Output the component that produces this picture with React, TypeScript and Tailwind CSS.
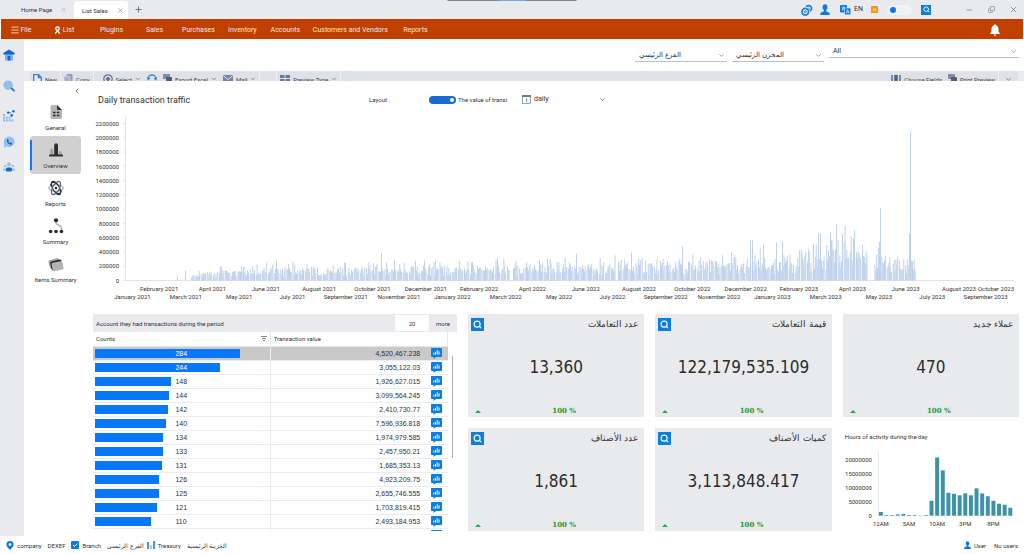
import type { ReactNode } from 'react';
import { ChevronDown, ChevronLeft, Copy, Menu, Minus, Plus, Search, X } from 'lucide-react';

type IconProps = { className?: string };

const MENU_ITEMS = ['Plugins', 'Sales', 'Purchases', 'Inventory', 'Accounts', 'Customers and Vendors', 'Reports'];

const ROWS = [
  { count: 284, value: '4,520,467.238' },
  { count: 244, value: '3,055,122.03' },
  { count: 148, value: '1,926,627.015' },
  { count: 144, value: '3,099,564.245' },
  { count: 142, value: '2,410,730.77' },
  { count: 140, value: '7,596,936.818' },
  { count: 134, value: '1,974,979.585' },
  { count: 133, value: '2,457,950.21' },
  { count: 131, value: '1,685,353.13' },
  { count: 126, value: '4,923,209.75' },
  { count: 125, value: '2,655,746.555' },
  { count: 121, value: '1,703,819.415' },
  { count: 110, value: '2,493,184.953' },
  { count: 95, value: '' },
];

const MONTHS = [
  'January', 'February', 'March', 'April', 'May', 'June', 'July',
  'August', 'September', 'October', 'November', 'December',
];

const HOURS = [
  3.7, 0.7, 0.7, 1.3, 1.7, 0.7, 0.7, 0.3, 0.7, 15, 58.5, 45.5,
  23, 22, 20.5, 22.5, 20.5, 27.5, 22.3, 19.5, 15, 12, 11, 8,
];

/* ---------- daily traffic data ---------- */

// [x, typical height] control points of the plot
const ENVELOPE = [
  [98, 7], [160, 12], [280, 14], [400, 15], [500, 17], [600, 19], [680, 23],
  [720, 27], [745, 34], [770, 31], [800, 23], [823, 21],
];

// [x, height] of the days that stand out
const PEAKS = [
  [84, 5], [92, 10], [127, 14], [150, 13], [183, 20], [288, 27], [301, 20], [331, 20], [404, 22],
  [446, 20], [454, 22], [483, 27], [538, 28], [589, 34], [638, 28], [657, 40], [659, 40],
  [670, 36], [683, 38], [689, 39], [720, 37], [725, 47], [727, 47], [737, 49], [738, 40],
  [743, 56], [749, 46], [760, 42], [761, 50], [786, 39], [787, 72], [816, 47], [817, 149],
];

const envelopeAt = (x: number) => {
  const i = Math.max(1, ENVELOPE.findIndex(([px]) => px >= x));
  const [x0, y0] = ENVELOPE[i - 1];
  const [x1, y1] = ENVELOPE[i];
  return y0 + ((y1 - y0) * (x - x0)) / (x1 - x0);
};

const buildDays = () => {
  const days: number[][] = [];
  let seed = 4217;
  const next = () => {
    seed = (seed * 16807) % 2147483647;
    return seed / 2147483647;
  };
  for (let i = 0; i < 828; i++) {
    const x = 98 + i * 0.875;
    const r = next();
    const s = next();
    if (i % 7 === 3 || (x > 775 && x < 780) || (x > 416 && x < 419) || (x > 522 && x < 525)) continue;
    days.push([x, envelopeAt(x) * (0.3 + 0.7 * r + 0.7 * Math.pow(s, 6))]);
  }
  return days;
};

const DAYS = [...buildDays(), ...PEAKS];

/* ---------- icons ---------- */

const HomeIcon = () => (
  <svg viewBox="0 0 12 12" className="size-3">
    <path d="M2 5h8v6.500H2z" fill="#7fb0e8" />
    <path d="M6 .500 11.700 4v1.600H.3V4z" fill="#1467cf" />
    <path d="M4.600 7h2.800v4.500H4.600z" fill="#1467cf" />
  </svg>
);

const FindIcon = () => (
  <svg viewBox="0 0 12 12" className="size-3">
    <circle cx="5.200" cy="5.200" r="4.800" fill="#96bdeb" />
    <path d="m8.600 8.400 2.400 2.400" stroke="#1467cf" strokeWidth="1.600" strokeLinecap="round" />
  </svg>
);

const DotsIcon = () => (
  <svg viewBox="0 0 12 12" className="size-3">
    <g fill="#8fb8ea">
      <rect x="0" y="4" width="2" height="2" /><rect x="0" y="6.700" width="2" height="2" />
      <rect x="0" y="9.400" width="2" height="2" /><rect x="2.800" y="6.700" width="2" height="2" />
      <rect x="2.800" y="9.400" width="2" height="2" /><rect x="5.600" y="6.700" width="2" height="2" />
      <rect x="5.600" y="9.400" width="2" height="2" /><rect x="8.400" y="9.400" width="2" height="2" />
    </g>
    <g fill="#1467cf">
      <circle cx="5.200" cy="2.600" r="1.200" /><circle cx="10.400" cy="1.300" r="1.200" />
      <circle cx="8.600" cy="5.400" r="1.300" /><circle cx="7" cy="2.800" r=".7" />
    </g>
  </svg>
);

const PhoneIcon = () => (
  <svg viewBox="0 0 12 12" className="size-3">
    <path d="M6.200.500a5.300 5.300 0 1 1-2.400 10L.600 11.400l.800-3A5.400 5.400 0 0 1 6.200.500z" fill="#96bdeb" />
    <path d="M4 3.200 5 3l.8 1.600-.6.8c.4.8 1 1.300 1.700 1.600l.8-.6 1.500.9-.3 1.100C6.500 9.400 3 6.300 4 3.200z" fill="#1467cf" />
  </svg>
);

const GroupIcon = () => (
  <svg viewBox="0 0 12 10" className="h-[10px] w-3">
    <g fill="#96bdeb">
      <circle cx="6" cy="2.300" r="2" /><circle cx="2.200" cy="4" r="1.300" /><circle cx="9.800" cy="4" r="1.300" />
      <rect x="0" y="6.400" width="12" height="2.400" rx="1.200" />
    </g>
    <rect x="3" y="5.600" width="6" height="3.900" rx="1.500" fill="#1467cf" />
  </svg>
);

const GeneralIcon = () => (
  <svg viewBox="0 0 16 16" className="size-4">
    <path d="M4 1h5l5 5v7.500a1.500 1.500 0 0 1-1.500 1.500h-8.500A1.500 1.500 0 0 1 2.500 13.500v-11A1.500 1.500 0 0 1 4 1z" fill="#b5b5b5" />
    <path d="M9 1 14 6h-4a1 1 0 0 1-1-1z" fill="#333" />
    <path d="M5 8.500h2.600M8.800 8.500h2.600M5 11.500h2.600M8.800 11.500h2.600" stroke="#2b2d33" strokeWidth="1.300" />
  </svg>
);

const OverviewIcon = () => (
  <svg viewBox="0 0 16 16" className="size-4">
    <path d="M2.200 13V8a1.600 1.600 0 0 1 3.200 0v5zM10.800 13v-2.500a1.500 1.500 0 0 1 3 0V13z" fill="#a2a2a2" />
    <path d="M6.200 13V3.200a1.900 1.900 0 0 1 3.800 0V13z" fill="#2b2d33" />
    <rect x="1" y="12.500" width="14" height="2" rx=".8" fill="#2b2d33" />
  </svg>
);

const ReportsIcon = () => (
  <svg viewBox="0 0 16 16" className="size-4" fill="none">
    <ellipse cx="8" cy="8" rx="7.300" ry="3.200" stroke="#aeb2b8" strokeWidth="1.200" />
    <ellipse cx="8" cy="8" rx="7.300" ry="3.200" transform="rotate(60 8 8)" stroke="#26323f" strokeWidth="1.300" />
    <ellipse cx="8" cy="8" rx="7.300" ry="3.200" transform="rotate(-60 8 8)" stroke="#5f6a76" strokeWidth="1.300" />
    <path d="M2.500 5.500 4 2.200l3.500.6M13.500 10.500 12 13.800l-3.500-.6" stroke="#26323f" strokeWidth="1.200" />
    <circle cx="8" cy="8" r="2.600" fill="#fff" />
    <circle cx="8" cy="8" r="1.300" fill="#26323f" />
  </svg>
);

const SummaryIcon = () => (
  <svg viewBox="0 0 16 16" className="size-4">
    <path d="M8 3v1.500c0 3.500 5.500 1.500 5.500 6V12" stroke="#b5b5b5" strokeWidth="1.500" fill="none" />
    <g fill="#2b2d33">
      <circle cx="8" cy="2.300" r="2.100" /><circle cx="2.600" cy="13.500" r="1.800" />
      <circle cx="8" cy="13.500" r="1.800" /><circle cx="13.500" cy="13.500" r="1.800" />
    </g>
  </svg>
);

const ItemsIcon = () => (
  <svg viewBox="0 0 16 16" className="size-4">
    <rect x="1" y="3" width="11" height="9" rx="1.800" transform="rotate(-16 7 7.500)" fill="#a4a4a4" />
    <rect x="2.500" y="4.500" width="11.500" height="9" rx="1.500" transform="rotate(-14 8 8)" fill="#2b2d33" />
    <rect x="4" y="6" width="11" height="8.500" rx="1.500" transform="rotate(-12 9 10)" fill="#b3b3b3" />
  </svg>
);

const PersonIcon = ({ className = '' }: IconProps) => (
  <svg viewBox="0 0 10 12" className={className} fill="#0a7be0">
    <ellipse cx="5" cy="3.500" rx="2.600" ry="3.300" />
    <path d="M3.800 6h2.400v2L10 9.800V12H0V9.800L3.800 8z" />
  </svg>
);

const GearsIcon = () => (
  <svg viewBox="0 0 12 12" className="size-3" fill="none" stroke="#1b80d8">
    <circle cx="4.300" cy="7.700" r="3.300" strokeWidth="1.700" />
    <circle cx="4.300" cy="7.700" r="1" strokeWidth=".9" />
    <path d="M5.300 2.600a3 3 0 1 1 4 4.400" strokeWidth="1.700" />
    <path d="M7.300 3.700a1.400 1.400 0 0 1 .8 2.200" strokeWidth=".9" />
  </svg>
);

const LanguageIcon = () => (
  <svg viewBox="0 0 11 10" className="h-[10px] w-[11px]">
    <rect width="7" height="7.500" rx="1" fill="#0a7be0" />
    <rect x="4.500" y="3" width="6.300" height="6.800" rx="1" fill="#0a7be0" stroke="#e8eaee" strokeWidth=".6" />
    <path d="M1.800 2.200h3.200M3.400 1.500v.7M4.500 2.200c-.3 1.500-1.300 2.300-2.600 2.900M2.300 3c.4.9 1 1.300 1.800 1.700" stroke="#fff" strokeWidth=".6" fill="none" />
    <path d="m6.300 8.200 1.400-3.600 1.400 3.600M6.800 7.100h1.800" stroke="#fff" strokeWidth=".6" fill="none" />
  </svg>
);

const RibbonIcon = () => (
  <svg viewBox="0 0 7 9" className="h-2 w-[7px]" fill="none" stroke="#fff" strokeWidth="1.500">
    <path d="M2 4.200C1 1.800 2 .9 3.500.9S6 1.800 5 4.200L3.700 5.500 6 8.500M3.300 5.500 1 8.500M2 4l1.500 1.500L5 4" />
  </svg>
);

const BellIcon = () => (
  <svg viewBox="0 0 10 12" className="h-3 w-[10px]" fill="#fff">
    <path d="M5 .3c.6 0 .9.4.9.9C7.800 1.700 8.500 3.200 8.500 5v2.500l1.300 1.700v.8H.2v-.8l1.300-1.700V5c0-1.800.7-3.300 2.600-3.800 0-.5.3-.9.9-.9zM3.800 10.600h2.400a1.200 1.200 0 0 1-2.400 0z" />
  </svg>
);

const ChatChartIcon = () => (
  <svg viewBox="0 0 11 11" className="h-[11px] w-[11px]">
    <path d="M.8 0h9.400a.8.8 0 0 1 .8.8v7.400a.8.8 0 0 1-.8.8H5L2.500 11V9H.8A.8.8 0 0 1 0 8.200V.8A.8.8 0 0 1 .8 0z" fill="#0a7fe0" />
    <path d="M2.800 4.600v2M4.500 3.900v2.700M6.200 2.200v4.400M8 3.400v3.200" stroke="#fff" strokeWidth="1" />
  </svg>
);

const FileIcon = () => (
  <svg viewBox="0 0 9 11" className="h-[11px] w-[9px] shrink-0" fill="#eaf1fb" stroke="#3b7fd0" strokeWidth="1.300">
    <path d="M.7.7h4.800L8.300 3.500v7H.7z" />
    <path d="M5.300.7v3h3" fill="#3b7fd0" />
  </svg>
);

const PagesIcon = () => (
  <svg viewBox="0 0 9 10" className="h-[10px] w-[9px] shrink-0" fill="#8d9cb3">
    <rect x="2.500" width="6" height="7" rx="1" />
    <rect y="2" width="6" height="8" rx="1" fill="#a9b5c6" stroke="#dee1e6" strokeWidth=".6" />
  </svg>
);

const TargetIcon = () => (
  <svg viewBox="0 0 10 10" className="size-[10px] shrink-0" fill="none" stroke="#64768f">
    <circle cx="5" cy="5" r="4.200" strokeWidth="1.300" />
    <circle cx="5" cy="5" r="1.600" fill="#64768f" />
  </svg>
);

const SyncIcon = () => (
  <svg viewBox="0 0 10 10" className="size-[10px] shrink-0" fill="none" stroke="#4b86cc" strokeWidth="1.400">
    <path d="M1 5a4 4 0 0 1 8 0M0 3.500 1.200 5.500 3 4M7.200 4.300 9 5.500l1-2M1.500 7a4 4 0 0 0 7 0" />
  </svg>
);

const SheetIcon = () => (
  <svg viewBox="0 0 9 10" className="h-[10px] w-[9px] shrink-0" fill="#7d8ca4">
    <rect width="7" height="5" rx=".8" />
    <rect x="3" y="3" width="6" height="6" rx=".8" fill="#4c607d" />
  </svg>
);

const EnvelopeIcon = () => (
  <svg viewBox="0 0 10 8" className="h-2 w-[10px] shrink-0">
    <rect width="10" height="8" rx="1" fill="#7286a3" />
    <path d="m.5.8 4.500 3.600L9.500.8" stroke="#dee1e6" fill="none" />
  </svg>
);

const GridIcon = () => (
  <svg viewBox="0 0 10 8" className="h-2 w-[10px] shrink-0" fill="#647ba0">
    <rect width="4.500" height="3" /><rect x="5.500" width="4.500" height="3" />
    <rect y="4" width="4.500" height="3" /><rect x="5.500" y="4" width="4.500" height="3" />
  </svg>
);

const FieldsIcon = () => (
  <svg viewBox="0 0 10 8" className="h-2 w-[10px] shrink-0" fill="#7589a8">
    <rect width="2" height="8" /><rect x="3.200" width="3.600" height="8" fill="#4d6488" /><rect x="8" width="2" height="8" />
  </svg>
);

/* ---------- page pieces ---------- */

const ToolbarItem = ({ icon, label, menu = false }: { icon: ReactNode; label?: string; menu?: boolean }) => (
  <button type="button" className="flex items-center gap-[3px] whitespace-nowrap px-[3px] pb-1">
    {icon}
    {label}
    {menu && <ChevronDown className="size-[6px]" />}
  </button>
);

const Divider = () => <span className="w-px self-stretch bg-[#eef0f3]" />;

const FilterSelect = ({ label, value, className = '' }: { label: string; value: string; className?: string }) => (
  <div className={`relative border-b border-[#b9c0cb] ${className}`}>
    <select aria-label={label} className="block h-3 w-full appearance-none bg-transparent pl-1 text-left text-[7px] leading-3 outline-none">
      <option>{value}</option>
    </select>
    <ChevronDown className="pointer-events-none absolute right-[2px] top-[3px] size-[7px] text-[#4b5563]" />
  </div>
);

const NavItem = ({ icon, label, active = false }: { icon: ReactNode; label: string; active?: boolean }) => (
  <button
    type="button"
    className={`relative flex h-[38px] w-[51px] flex-col items-center justify-center gap-[3px] whitespace-nowrap rounded-[3px] pt-px text-[6px] leading-[9px] ${active ? 'bg-[#d0d0d0]' : ''}`}
  >
    {active && <span className="absolute bottom-1 left-0 top-1 w-[2px] bg-[#0a7cff]" />}
    {icon}
    {label}
  </button>
);

const StatCard = ({ title, value, searchable = true }: { title: string; value: string; searchable?: boolean }) => (
  <article className="flex min-h-[103px] flex-col bg-[#e8eaee] px-[3px] pb-[2px] pt-[3px]">
    <div className="flex h-[14px] items-center justify-between">
      {searchable ? (
        <button type="button" aria-label="Search" className="flex size-[13px] items-center justify-center bg-[#0a7fe0] text-white">
          <Search className="size-[9px]" strokeWidth={3} />
        </button>
      ) : (
        <span />
      )}
      <h3 dir="rtl" className="pr-[3px] text-[9px] font-medium leading-3 text-[#333]">{title}</h3>
    </div>
    <p className="flex flex-1 items-center justify-center pb-1 font-['DejaVu_Sans_Condensed','DejaVu_Sans',sans-serif] text-[17px] leading-6 text-[#2c2c2c]">
      {value}
    </p>
    <div className="relative flex h-2 items-center justify-center">
      <svg viewBox="0 0 6 3" className="absolute left-1 h-[3px] w-[6px]" fill="#18b04f"><path d="M3 0 6 3H0z" /></svg>
      <span className="pl-4 font-['DejaVu_Serif',serif] text-[7px] font-bold leading-2 text-[#1f9a2b]">100 %</span>
    </div>
  </article>
);

const TrafficChart = () => (
  <svg viewBox="0 0 926 190" className="block w-full" role="img" aria-label="Daily transaction traffic">
    <path d="M32.500 4v165M32 168.500h889" stroke="#dfe5ee" fill="none" />
    <g fill="#333" fontSize="6">
      {Array.from({ length: 12 }, (_, i) => (
        <g key={i}>
          <text x="26" y={170.7 - i * 14.27} textAnchor="end">{i * 200000}</text>
          <path d={`M30 ${168.5 - i * 14.27}h2`} stroke="#dfe5ee" />
        </g>
      ))}
      {Array.from({ length: 34 }, (_, i) => (
        <text key={i} x={i === 33 ? 903 : 39.5 + i * 26.66} y={i % 2 ? 179 : 187} textAnchor="middle">
          {`${MONTHS[i % 12]} ${2021 + Math.floor(i / 12)}`}
        </text>
      ))}
    </g>
    <g fill="#bfd2ec">
      {DAYS.map(([x, h], i) => (
        <rect key={i} x={x} y={168.5 - h} width="1" height={h} />
      ))}
    </g>
  </svg>
);

const HoursChart = () => (
  <figure className="pt-1">
    <figcaption className="pl-[2px] leading-[10px]">Hours of activity during the day</figcaption>
    <svg viewBox="0 0 177 88" className="block w-full" role="img" aria-label="Hours of activity during the day">
      <path d="M35.500 10v64" stroke="#e2e6ec" />
      <g fill="#333" fontSize="6">
        {[0, 1, 2, 3, 4].map((i) => (
          <text key={i} x="29" y={76 - i * 14.1} textAnchor="end">{i * 5000000}</text>
        ))}
        {['12AM', '5AM', '10AM', '3PM', '8PM'].map((label, i) => (
          <text key={label} x={38 + i * 28.25} y="84.500" textAnchor="middle">{label}</text>
        ))}
      </g>
      <g fill="#3c92a6">
        {HOURS.map((h, i) => (
          <rect key={i} x={36 + i * 5.65} y={74 - h} width="4" height={h} />
        ))}
      </g>
    </svg>
  </figure>
);

const AccountsTable = () => (
  <section className="min-w-0">
    <div className="flex h-[18px] items-center bg-[#e8eaee]">
      <label htmlFor="top-count" className="flex-1 pl-[3px]">Account they had transactions during the period</label>
      <input id="top-count" defaultValue="20" className="h-4 w-[34px] bg-white text-center outline-none" />
      <span className="w-7 text-center">more</span>
    </div>
    <div className="relative h-[199px] overflow-hidden pr-[9px]">
      <table className="w-full table-fixed border-collapse">
        <colgroup>
          <col className="w-[50%]" />
          <col className="w-[44%]" />
          <col className="w-[6%]" />
        </colgroup>
        <thead>
          <tr className="h-[14px] border-b border-[#e3e6ea] text-left">
            <th className="border-r border-[#e3e6ea] px-[3px] py-0 font-normal">
              <span className="flex items-center justify-between">
                Counts
                <svg viewBox="0 0 6 5" className="h-[5px] w-[6px]" stroke="#666" strokeWidth=".8"><path d="M0 .5h6M1 2.500h4M2 4.500h2" /></svg>
              </span>
            </th>
            <th className="px-[3px] py-0 font-normal">Transaction value</th>
            <th className="border-r border-[#e3e6ea] p-0" />
          </tr>
        </thead>
        <tbody className="font-['Liberation_Sans',sans-serif] text-[7px] text-[#333]">
          {ROWS.map(({ count, value }, i) => (
            <tr key={count} className={`h-[14px] border-b border-[#e9edf1] ${i === 0 ? 'bg-[#c9c9c9]' : ''}`}>
              <td className="border-r border-[#e9edf1] py-0 pl-[2px] pr-0">
                <div className="relative flex h-[9px] items-center">
                  <span className="h-full bg-[#0878f8]" style={{ width: `${(count / 284) * 83}%` }} />
                  <span className={`absolute left-[46%] leading-[9px] ${i < 2 ? 'text-white' : ''}`}>{value && count}</span>
                </div>
              </td>
              <td className="py-0 pl-0 pr-[6px] text-right leading-[9px]">{value}</td>
              <td className="p-0">
                <button type="button" aria-label="Show chart" className="mx-auto block"><ChatChartIcon /></button>
              </td>
            </tr>
          ))}
        </tbody>
      </table>
      <span className="absolute right-1 top-6 h-[102px] w-px bg-[#a9b1c0]" />
    </div>
  </section>
);

export default function App() {
  return (
    <div className="flex min-h-screen flex-col bg-white font-[Roboto,'Noto_Sans',sans-serif] text-[6px] leading-[9px] text-[#333]">
      {/* Window title bar */}
      <header className="relative flex h-[19px] items-center bg-[#e8eaee]">
        <span className="absolute left-1/2 top-0 flex h-px w-[129px] -translate-x-1/2 justify-center bg-[#858790]">
          <span className="w-[26px] bg-[#6aaae6]" />
        </span>
        <button type="button" className="ml-[21px] flex w-[53px] items-center justify-between whitespace-nowrap pr-[7px]">
          Home Page <X className="size-[7px] shrink-0 text-[#a5a8ae]" />
        </button>
        <button type="button" className="flex h-[18px] w-[54px] items-center justify-between self-end whitespace-nowrap rounded-t-[3px] bg-white pl-2 pr-1">
          List Sales <X className="size-[7px] shrink-0 text-[#2b86dd]" />
        </button>
        <button type="button" aria-label="New tab" className="ml-[6px]"><Plus className="size-[9px] text-[#555]" /></button>
        <div className="ml-auto flex items-center pr-[6px]">
          <button type="button" aria-label="Settings" className="mr-[7px]"><GearsIcon /></button>
          <button type="button" aria-label="Profile"><PersonIcon className="h-[11px] w-[10px]" /></button>
          <button type="button" className="ml-[10px] flex items-center gap-[3px] text-[7px]"><LanguageIcon /> EN</button>
          <span className="ml-2 flex size-[7px] items-center justify-center bg-[#ff9320]"><span className="size-[3px] bg-[#ffbd72]" /></span>
          <label className="relative ml-[9px] flex">
            <input type="checkbox" aria-label="Dark mode" className="sr-only" />
            <span className="flex h-[10px] w-[25px] items-center rounded-full bg-[#f1f2f5] pl-[3px]">
              <span className="size-[6px] rounded-full bg-[#0a78f5]" />
            </span>
          </label>
          <button type="button" aria-label="Search" className="ml-[9px] flex size-[10px] items-center justify-center bg-[#0a7fe0] text-white">
            <Search className="size-[7px]" strokeWidth={3} />
          </button>
          <button type="button" aria-label="Minimize" className="ml-[34px]"><Minus className="size-2 text-[#777]" /></button>
          <button type="button" aria-label="Restore" className="ml-[15px]"><Copy className="size-[7px] -scale-x-100 rotate-180 text-[#777]" /></button>
          <button type="button" aria-label="Close" className="ml-[14px]"><X className="size-[9px] text-[#777]" /></button>
        </div>
      </header>

      {/* Main menu */}
      <nav className="mx-px flex h-5 items-center bg-[#c04000] pt-[2px] text-[7px] text-[#fbe6dc]">
        <button type="button" className="flex w-[39px] items-center justify-center gap-px">
          <Menu className="size-[10px]" /> File
        </button>
        <button type="button" className="mr-[2px] flex w-12 items-center justify-center gap-[2px]">
          <RibbonIcon /> List
        </button>
        {MENU_ITEMS.map((item) => (
          <button key={item} type="button" className="min-w-[43px] whitespace-nowrap px-[6px]">{item}</button>
        ))}
        <button type="button" aria-label="Notifications" className="ml-auto mr-[23px]"><BellIcon /></button>
      </nav>

      <div className="flex flex-1">
        {/* Shortcut rail */}
        <aside className="flex w-6 shrink-0 flex-col items-start gap-[14px] bg-[#e8eaee] pl-[3px] pt-[10px]">
          <button type="button" aria-label="Home" className="mb-[5px]"><HomeIcon /></button>
          <button type="button" aria-label="Search" className="mb-1"><FindIcon /></button>
          <button type="button" aria-label="Apps"><DotsIcon /></button>
          <button type="button" aria-label="Calls"><PhoneIcon /></button>
          <button type="button" aria-label="Contacts"><GroupIcon /></button>
        </aside>

        <main className="flex min-w-0 flex-1 flex-col">
          <div className="flex h-8 justify-end gap-[5px] pr-[5px] pt-[6px]">
            <FilterSelect label="Branch" value="الفرع الرئيسي" className="mt-1 h-[13px] w-[92px]" />
            <FilterSelect label="Store" value="المخزن الرئيسي" className="mt-1 h-[13px] w-[92px]" />
            <FilterSelect label="Type" value="All" className="h-[13px] w-[190px]" />
          </div>

          {/* Toolbar, its lower half lies under the report panel */}
          <div className="bg-[#e8eaee] px-[6px]">
            <div className="flex h-5 items-center rounded-[3px] bg-[#dee1e6] text-[#3d4450]">
              <ToolbarItem icon={<FileIcon />} label="New" />
              <Divider />
              <ToolbarItem icon={<PagesIcon />} label="Copy" />
              <Divider />
              <span className="w-[6px]" />
              <ToolbarItem icon={<TargetIcon />} label="Select" menu />
              <ToolbarItem icon={<SyncIcon />} />
              <ToolbarItem icon={<SheetIcon />} label="Export Excel" menu />
              <ToolbarItem icon={<EnvelopeIcon />} label="Mail" menu />
              <Divider />
              <span className="w-4" />
              <Divider />
              <ToolbarItem icon={<GridIcon />} label="Preview Type" menu />
              <Divider />
              <span className="flex-1" />
              <ToolbarItem icon={<FieldsIcon />} label="Choose Fields" />
              <ToolbarItem icon={<SheetIcon />} label="Print Preview" />
              <Divider />
              <button type="button" aria-label="More" className="px-[6px] pb-1"><ChevronDown className="size-[7px]" /></button>
            </div>
          </div>

          <div className="relative -mt-[10px] flex flex-1 bg-white">
            {/* Report sections */}
            <nav className="flex w-[66px] shrink-0 flex-col pl-[6px] pt-[6px]">
              <button type="button" aria-label="Collapse" className="mb-[3px] ml-[43px] w-2"><ChevronLeft className="size-2" /></button>
              <NavItem icon={<GeneralIcon />} label="General" />
              <NavItem icon={<OverviewIcon />} label="Overview" active />
              <NavItem icon={<ReportsIcon />} label="Reports" />
              <NavItem icon={<SummaryIcon />} label="Summary" />
              <NavItem icon={<ItemsIcon />} label="Items Summary" />
            </nav>

            <div className="min-w-0 flex-1 pl-[3px] pr-[5px]">
              <div className="flex h-[31px] items-center pt-[6px]">
                <h2 className="w-[276px] pl-[5px] text-[9px] leading-3">Daily transaction traffic</h2>
                <span className="w-[60px]">Layout</span>
                <label className="relative flex w-[84px] items-center gap-[2px] whitespace-nowrap">
                  <input type="checkbox" defaultChecked className="sr-only" />
                  <span className="flex h-2 w-[27px] shrink-0 items-center justify-end rounded-full bg-[#1b6ad2] pr-[2px]">
                    <span className="size-1 rounded-full bg-white" />
                  </span>
                  The value of transi
                </label>
                <div className="relative ml-[9px] flex w-[84px] items-center gap-[3px]">
                  <svg viewBox="0 0 9 9" className="size-[9px] shrink-0" fill="none">
                    <rect x=".5" y="1" width="8" height="7.500" stroke="#858a92" strokeWidth=".8" />
                    <path d="M0 1h9" stroke="#555" strokeWidth="1.400" />
                    <path d="M3.800 4 4.700 3.500v3.700" stroke="#3b83d0" strokeWidth=".8" />
                  </svg>
                  <select aria-label="Period" className="w-full appearance-none bg-transparent text-[7px] outline-none">
                    <option>daily</option>
                  </select>
                  <ChevronDown className="pointer-events-none absolute right-0 size-[7px]" />
                </div>
              </div>

              <TrafficChart />

              <div className="mt-3 grid grid-cols-[364fr_551fr] gap-[11px]">
                <AccountsTable />
                <div className="grid grid-cols-3 gap-[11px]">
                  <StatCard title="عدد التعاملات" value="13,360" />
                  <StatCard title="قيمة التعاملات" value="122,179,535.109" />
                  <StatCard title="عملاء جديد" value="470" searchable={false} />
                  <StatCard title="عدد الأصناف" value="1,861" />
                  <StatCard title="كميات الأصناف" value="3,113,848.417" />
                  <HoursChart />
                </div>
              </div>
            </div>
          </div>
        </main>
      </div>

      {/* Status bar */}
      <footer className="flex h-[18px] items-center whitespace-nowrap px-[6px]">
        <svg viewBox="0 0 8 10" className="mr-[3px] h-[9px] w-2">
          <path d="M4 0a4 4 0 0 1 4 4c0 2.500-2.500 4.500-4 6-1.500-1.500-4-3.500-4-6a4 4 0 0 1 4-4z" fill="#0a7be0" />
          <circle cx="4" cy="4" r="1.500" fill="#fff" />
        </svg>
        <span>company</span>
        <span className="ml-[6px]">DEXEF</span>
        <svg viewBox="0 0 8 8" className="ml-[6px] mr-[3px] size-2">
          <rect width="8" height="8" rx="1" fill="#0a7be0" />
          <path d="m2 4 1.500 1.500L6.200 2.600" stroke="#fff" fill="none" />
        </svg>
        <span>Branch</span>
        <span dir="rtl" className="ml-[6px]">الفرع الرئيسي</span>
        <svg viewBox="0 0 8 8" className="ml-[3px] mr-[3px] size-2">
          <path d="M0 1h2v7H0zM6 0h2v8H6z" fill="#3d9be9" />
          <path d="M3 4h2v4H3z" fill="#9fcdf5" />
        </svg>
        <span>Treasury</span>
        <span dir="rtl" className="ml-[6px]">الخزينة الرئيسية</span>
        <PersonIcon className="ml-auto mr-[3px] h-2 w-[7px]" />
        <span>User</span>
        <span className="ml-2">No users</span>
      </footer>
    </div>
  );
}
